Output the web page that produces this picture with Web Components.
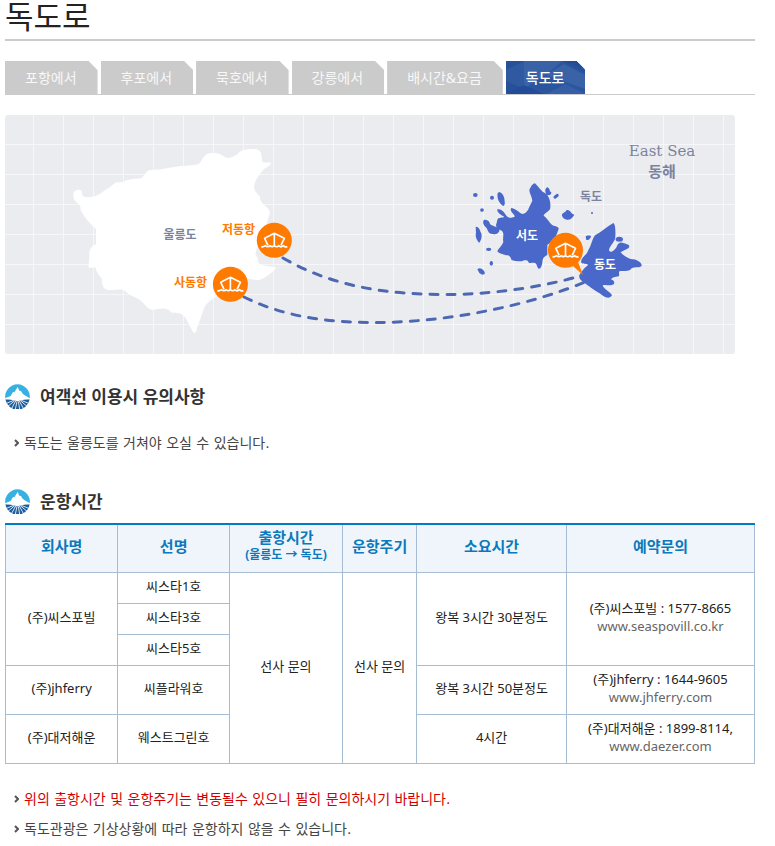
<!DOCTYPE html>
<html lang="ko">
<head>
<meta charset="utf-8">
<title>독도로</title>
<style>
body{margin:0 20px 0 5px;background:#fff;color:#222;font-family:"Noto Sans","Noto Sans CJK KR",sans-serif;font-size:14px}
</style>
</head>
<body>
<dokdo-page></dokdo-page>
<script>
function define(name, html){
  const t = document.createElement('template');
  t.innerHTML = html;
  customElements.define(name, class extends HTMLElement{
    constructor(){
      super();
      this.attachShadow({mode:'open'}).append(t.content.cloneNode(true));
    }
  });
}

define('page-title', `
<style>
:host{display:block;border-bottom:2px solid #ccc;padding-bottom:3px;font-family:"Liberation Sans","Noto Sans CJK KR",sans-serif}
h1{margin:0;font-size:31px;line-height:36px;font-weight:400;color:#222}
</style><h1><slot></slot></h1>`);

define('tab-bar', `
<style>
:host{display:block;margin-top:20px;border-bottom:1px solid #ccc}
nav{display:flex;gap:3px}
</style><nav aria-label="노선"><slot></slot></nav>`);

define('tab-link', `
<style>
:host{display:block}
a{display:block;position:relative;padding:0 21px 0 20px;line-height:33px;font-size:14px;color:#f8f8f8;background:#cbcbcb;text-decoration:none;clip-path:polygon(0 0,calc(100% - 9px) 0,100% 9px,100% 100%,0 100%)}
svg{display:none;position:absolute;inset:0;width:100%;height:100%}
span{position:relative}
:host([current]) a{background:#27509b;color:#fff;font-weight:500}
:host([current]) svg{display:block}
</style>
<a href="#"><svg viewBox="0 0 80 33" preserveAspectRatio="none" aria-hidden="true">
<path fill="#2f59a0" d="M0 9 18 0 40 14 18 28 0 20Z"/><path fill="#3a62a6" d="M18 0H57L40 14 18 28Z"/><path fill="#2a559f" d="M40 14 57 0 80 12V33H18V28Z"/><path fill="#3a62a6" d="M40 14 58 3 80 14V28L62 22Z"/><path fill="#234c98" d="M0 33 18 24 38 33ZM58 0H80V8Z"/><path fill="#365fa5" d="M40 33 60 23 80 33Z"/></svg><span><slot></slot></span></a>`);

define('section-heading', `
<style>
:host{display:flex;align-items:center;gap:10px}
svg{width:25px;height:25px;flex:none}
h2{margin:0;font-size:17px;line-height:25px;font-weight:700;color:#333}
</style>
<svg viewBox="0 0 75 75" aria-hidden="true">
<path fill="#1d5c9c" d="M1 46A37 37 0 0 0 74 46Z"/>
<path fill="#37b1e1" d="M1 44A37 37 0 1 1 74 44L59 44H17Z"/>
<path fill="#fff" d="M0 43 17 36 24 24 28 25 38 9 43 20 48 21 53 29 59 34 75 43V46Q58 46 50 49 37 54 25 49 17 46 0 46Z"/>
<path stroke="#fff" stroke-width="2.500" fill="none" d="M26 49 2 59M29 50 8 68M32 51 19 75M36 52 31 76M40 52 44 76M43 51 56 75M46 50 67 68M49 49 73 59"/></svg>
<h2><slot></slot></h2>`);

define('note-list', `
<style>
:host{display:block}
ul{margin:0;padding:0 0 0 9px;list-style:none}
</style><ul role="list"><slot></slot></ul>`);

define('note-item', `
<style>
:host{display:block;color:#444;font-family:"DejaVu Sans","Noto Sans CJK KR",sans-serif}
:host([alert]) span{color:#d30000}
li{display:flex;align-items:center;gap:5px;font-size:14px;line-height:30px}
svg{width:5px;height:8px;flex:none}
</style><li><svg viewBox="0 0 5 8" aria-hidden="true"><path d="M1 1 4 4 1 7" fill="none" stroke="#555" stroke-width="2"/></svg><span><slot></slot></span></li>`);

define('route-map', `
<style>
:host{display:block;max-width:730px}
svg{display:block;width:100%;height:auto}
text{font-family:"Noto Sans CJK KR",sans-serif;font-weight:700;font-size:12px}
.sea{fill:#7c839c;text-anchor:middle}
.port{fill:#ff7a00}
.land{fill:#fff;text-anchor:middle}
</style>
<svg viewBox="5 115 730 239" role="img" aria-label="울릉도에서 독도로 가는 항로">
<defs>
<pattern id="grid" x="33" y="144" width="30" height="30" patternUnits="userSpaceOnUse"><path fill="#f7f7fa" d="M0 0H30V1H1V30H0Z"/></pattern>
<g id="port"><circle r="17.5" fill="#ff7a00"/><g transform="scale(.33333)" fill="none" stroke="#fff" stroke-width="5" stroke-linejoin="round"><path d="M-19 15-29-6 0-21 30-6 20 15M0-21V16"/><path d="M-39 19C-33 21-31 19-27 16-22 21-16 20-13 16-8 21-4 20 0 16 5 21 10 20 13 16 18 21 23 20 27 16 31 20 34 21 39 19"/></g></g>
</defs>
<rect x="5" y="115" width="730" height="239" rx="3" fill="#ebecf0"/>
<rect x="5" y="115" width="730" height="239" rx="3" fill="url(#grid)"/>
<path transform="translate(60 140) scale(.33333)" fill="#fff" d="M40 165C38 150 62 143 66 156C66 168 70 171 80 171C105 172 118 165 135 150C150 145 158 132 170 127C180 128 190 127 200 121C215 114 235 118 245 113C258 104 258 92 270 90C310 90 330 80 370 78C390 76 405 76 415 73C430 62 428 38 460 39C485 38 490 52 503 54C530 52 535 35 550 30C565 26 585 26 595 30C608 36 603 55 608 67C615 69 625 66 634 70C630 78 615 85 607 92C590 115 580 130 583 148C585 155 597 165 600 170C598 190 620 195 630 215C628 230 622 240 620 250C605 280 595 310 586 342C590 350 597 360 595 368C610 382 640 376 648 384C635 400 615 415 600 419C585 421 570 418 560 415L500 440C470 475 440 480 430 510C420 540 412 560 409 575C405 580 400 580 397 572C385 555 382 530 360 520C345 518 338 522 330 513C315 500 295 507 280 509C265 512 255 492 240 480C225 470 210 468 195 452C180 444 165 452 145 450C128 448 126 435 125 415C115 405 110 395 105 380C100 384 92 384 86 383C84 375 89 365 88 345C88 325 95 318 108 313L108 268C90 250 75 235 65 215C58 210 66 200 56 192C46 185 40 178 40 165Z"/>
<g fill="none" stroke="#4d68b2" stroke-width="3" stroke-linecap="round" stroke-dasharray="8 9">
<path d="M283 258C340 291 400 294.5 450 294.5C500 294 550 285 580 276"/><path d="M244 297C290 320 340 322.500 378 322.500C450 322 530 305 585 282"/></g>
<g transform="translate(460 130) scale(.33333)" fill="#4a68ca">
<path d="M225 160C235 170 238 175 243 180C250 190 262 188 267 205C272 215 272 230 270 238C265 245 253 250 251 257C262 265 270 280 278 286C287 290 297 290 296 297C290 310 292 322 262 345L262 375C250 382 248 385 247 398C245 410 240 418 236 416C230 412 232 402 225 399C215 397 208 403 205 395C200 388 190 392 185 394C170 393 160 393 154 389C152 378 145 375 138 376C128 372 118 372 112 364C115 355 128 345 130 335C127 325 133 315 128 305C120 298 108 295 108 285C112 275 110 270 115 265C125 262 133 264 132 260C125 255 110 248 112 238C120 236 130 242 134 250C140 260 145 265 155 263C168 262 165 258 158 250C152 243 150 236 155 234C168 236 180 250 187 252C195 252 200 245 204 240C208 230 212 222 217 212C216 200 208 190 208 180C212 172 217 160 225 160Z"/>
<path d="M460 279C466 283 467 300 466 320C466 335 450 345 447 360C450 372 465 360 470 350C475 335 485 336 492 340C500 343 508 343 508 350C505 358 490 360 482 367C490 378 510 388 520 388C532 390 546 398 545 407C540 415 525 408 515 415C505 428 490 420 478 424C475 430 480 436 476 439C465 440 455 443 453 448C463 452 465 458 461 463C450 470 435 462 428 467C435 480 455 488 456 496C450 506 440 504 430 498C415 485 400 480 385 467C370 455 355 450 358 435C366 425 370 415 385 405C380 398 365 405 363 395C365 380 380 375 384 362C395 345 395 330 405 316C425 305 440 290 460 279Z"/>
<path d="M72 269C82 269 88 272 90 282C98 290 117 290 119 298C118 310 108 315 98 312C82 312 84 295 76 290C70 284 67 275 72 269Z"/>
<path d="M117 186C126 188 131 196 133 205C134 218 137 224 130 228C118 222 110 205 113 190Z"/>
<path d="M47 290C60 292 58 300 64 310C67 322 62 334 58 338C50 332 45 318 48 308Z"/>
<path d="M262 172C272 176 266 184 274 187C274 197 265 196 259 194C255 184 254 176 262 172Z"/>
<path d="M306 257C305 247 317 249 319 241C330 236 332 252 343 254C338 264 330 270 321 269C314 266 310 267 306 257Z"/>
<path d="M52 418C60 410 72 418 75 430C70 438 62 432 58 429Z"/>
<path d="M377 320C382 314 390 318 393 317C393 325 385 332 379 330Z"/>
<path d="M291 191C299 192 297 200 290 203C285 211 277 203 282 198Z"/>
<ellipse cx="478" cy="328" rx="11" ry="7.500"/><ellipse cx="86" cy="358" rx="8" ry="5"/><ellipse cx="94" cy="400" rx="5" ry="7"/>
<ellipse cx="46" cy="195" rx="7" ry="6"/><circle cx="96" cy="203" r="6"/><circle cx="66" cy="240" r="5.500"/><circle cx="396" cy="249" r="3"/>
</g>
<path fill="#ff7a00" d="M573 266 583 275 578 262Z"/>
<use href="#port" x="274.300" y="240.300"/><use href="#port" x="230.400" y="284.300"/><use href="#port" x="565.500" y="250.300"/>
<text class="sea" x="180" y="239">울릉도</text>
<text class="port" x="222" y="234">저동항</text>
<text class="port" x="174" y="287">사동항</text>
<text class="sea" x="591" y="201">독도</text>
<text class="land" x="527" y="240">서도</text>
<text class="land" x="605" y="269">동도</text>
<text class="sea" x="662" y="156" style="font-family:'DejaVu Serif',serif;font-weight:400;font-size:15px">East Sea</text>
<text class="sea" x="662" y="177" style="font-size:15px">동해</text>
</svg>`);

define('ferry-table', `
<style>
:host{display:block}
table{width:100%;table-layout:fixed;border-collapse:collapse;font-size:13px;line-height:18px;color:#222;text-align:center}
th,td{border:1px solid #a5bcd2;padding:2px 0 7px}
thead th{background:#f0f5fc;border-top:2px solid #007cc6;color:#0b79bb;font-size:15px;font-weight:700;height:38px}
tbody th{font-weight:400}
small{display:block;font-size:12px}
tr.short td{height:21px}
tr.tall td{height:39px}
a{color:#666;text-decoration:none}
</style>
<table>
<colgroup><col style="width:15%"><col style="width:14.9%"><col style="width:15.1%"><col style="width:9.9%"><col style="width:20%"><col></colgroup>
<thead><tr><th scope="col">회사명</th><th scope="col">선명</th><th scope="col">출항시간<small>(울릉도 → 독도)</small></th><th scope="col">운항주기</th><th scope="col">소요시간</th><th scope="col">예약문의</th></tr></thead>
<tbody>
<tr class="short"><th scope="rowgroup" rowspan="3">(주)씨스포빌</th><td>씨스타1호</td><td rowspan="5">선사 문의</td><td rowspan="5">선사 문의</td><td rowspan="3">왕복 3시간 30분정도</td><td rowspan="3">(주)씨스포빌 : 1577-8665<br><a href="#">www.seaspovill.co.kr</a></td></tr>
<tr class="short"><td>씨스타3호</td></tr>
<tr class="short"><td>씨스타5호</td></tr>
<tr class="tall"><th scope="row">(주)jhferry</th><td>씨플라워호</td><td>왕복 3시간 50분정도</td><td>(주)jhferry : 1644-9605<br><a href="#">www.jhferry.com</a></td></tr>
<tr class="tall"><th scope="row">(주)대저해운</th><td>웨스트그린호</td><td>4시간</td><td>(주)대저해운 : 1899-8114,<br><a href="#">www.daezer.com</a></td></tr>
</tbody></table>`);

define('dokdo-page', `
<style>
:host{display:block}
route-map{margin-top:20px}
.notice{margin-top:30px}
.notes{margin-top:19px}
.times{margin-top:31px}
ferry-table{margin-top:9px}
.footnotes{margin-top:20px}
</style>
<page-title>독도로</page-title>
<tab-bar><tab-link>포항에서</tab-link><tab-link>후포에서</tab-link><tab-link>묵호에서</tab-link><tab-link>강릉에서</tab-link><tab-link>배시간&amp;요금</tab-link><tab-link current>독도로</tab-link></tab-bar>
<route-map></route-map>
<section-heading class="notice">여객선 이용시 유의사항</section-heading>
<note-list class="notes"><note-item>독도는 울릉도를 거쳐야 오실 수 있습니다.</note-item></note-list>
<section-heading class="times">운항시간</section-heading>
<ferry-table></ferry-table>
<note-list class="footnotes"><note-item alert>위의 출항시간 및 운항주기는 변동될수 있으니 필히 문의하시기 바랍니다.</note-item><note-item>독도관광은 기상상황에 따라 운항하지 않을 수 있습니다.</note-item></note-list>`);
</script>
</body>
</html>
